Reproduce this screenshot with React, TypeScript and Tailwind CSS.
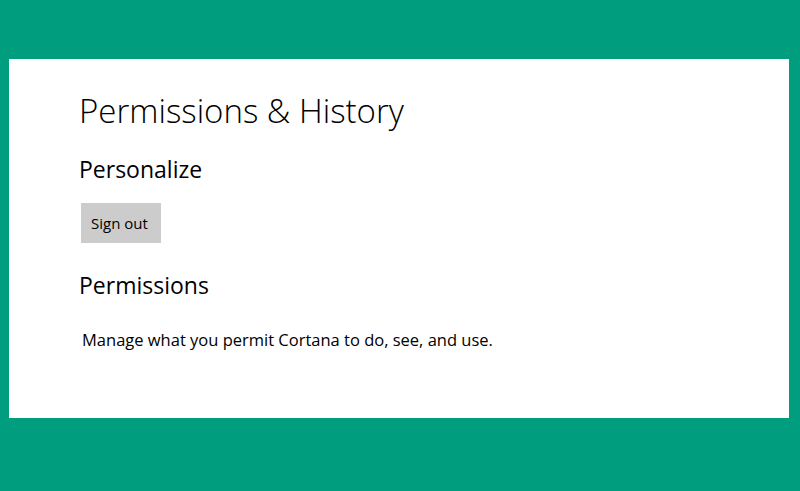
import React from 'react';

const App = () => {
  return (
    <div className="w-[800px] h-[491px] bg-[#009e7f] pt-[59px] pl-[9px] font-['Open_Sans',sans-serif]">
      <div className="w-[780px] h-[359px] bg-white pl-[70px] pt-[37px] text-black">
        <h1 className="text-[33px] font-light leading-none -mt-[2px]">Permissions &amp; History</h1>
        <h2 className="text-[23px] leading-none mt-[31px]">Personalize</h2>
        <button className="mt-[22px] ml-[2px] w-[80px] h-[40px] bg-[#cccccc] text-[15px] text-black text-left pl-[10px]">
          Sign out
        </button>
        <h2 className="text-[23px] leading-none mt-[31px]">Permissions</h2>
        <p className="text-[16.5px] leading-none mt-[35px] ml-[3px]">
          Manage what you permit Cortana to do, see, and use.
        </p>
      </div>
    </div>
  );
};

export default App;
